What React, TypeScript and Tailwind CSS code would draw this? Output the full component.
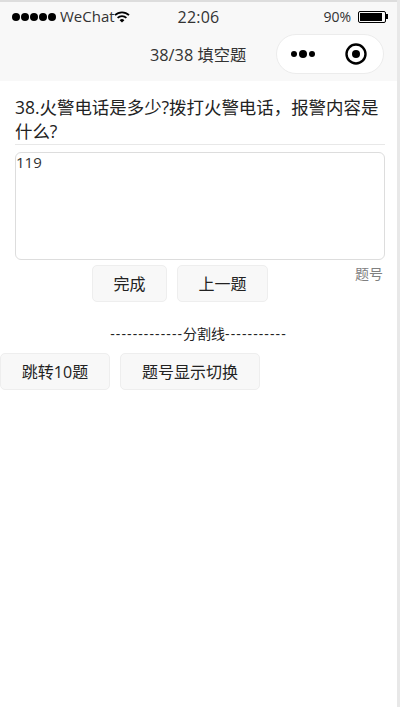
const font = { fontFamily: '"Open Sans", "Noto Sans CJK SC", sans-serif' };

function StatusBar() {
  return (
    <div className="flex h-[27px] items-center justify-between pl-[12px] pr-[9px] pt-[2px] text-[15px] leading-none text-[#333]">
      <div className="flex w-[132px] items-center">
        <div className="flex gap-[1px]">
          {[0, 1, 2, 3, 4].map((i) => (
            <span key={i} className="h-[8px] w-[8px] rounded-full bg-black" />
          ))}
        </div>
        <span className="ml-[4px]">WeChat</span>
        <svg width="16" height="12" viewBox="0 0 16 12" className="-ml-[1px]">
          <path d="M1 4.2a10 10 0 0 1 14 0" fill="none" stroke="#000" strokeWidth="1.8" />
          <path d="M3.6 6.8a6.4 6.4 0 0 1 8.8 0" fill="none" stroke="#000" strokeWidth="1.8" />
          <path d="M5.6 9.2a3.4 3.4 0 0 1 4.8 0L8 11.6z" fill="#000" />
        </svg>
      </div>
      <span className="-ml-[3px] text-[16px] tracking-[0.2px]">22:06</span>
      <div className="flex w-[132px] items-center justify-end gap-[7px]">
        <span className="text-[14px]">90%</span>
        <div className="flex items-center">
          <div className="flex h-[12px] w-[28px] items-center rounded-[2px] border border-black p-[1px]">
            <div className="h-full w-[90%] bg-black" />
          </div>
          <div className="h-[5px] w-[2px] bg-black" />
        </div>
      </div>
    </div>
  );
}

function Capsule() {
  return (
    <div className="flex h-[40px] w-[108px] items-center justify-between rounded-full border border-[#ececec] bg-white pl-[14px] pr-[16px]">
      <div className="flex items-center gap-[2px]">
        <span className="h-[6px] w-[6px] rounded-full bg-black" />
        <span className="h-[8px] w-[8px] rounded-full bg-black" />
        <span className="h-[6px] w-[6px] rounded-full bg-black" />
      </div>
      <svg width="22" height="22" viewBox="0 0 22 22">
        <circle cx="11" cy="11" r="9.5" fill="none" stroke="#000" strokeWidth="2.4" />
        <circle cx="11" cy="11" r="4" fill="#000" />
      </svg>
    </div>
  );
}

export default function App() {
  return (
    <div className="min-h-[707px] w-[400px] border-r-[3px] border-[#e8e8e8] bg-white" style={font}>
      <div className="h-[81px] border-t-2 border-[#dddddd] bg-[#f8f8f8]">
        <StatusBar />
        <div className="flex h-[50px] items-center justify-between">
          <span className="ml-[150px] mt-[2px] text-[16.3px] text-[#333]">38/38 填空题</span>
          <div className="mr-[13px]">
            <Capsule />
          </div>
        </div>
      </div>

      <div className="ml-[15px] mr-[12px] mt-[14px] border-b border-[#e8e8e8] pb-[1px] text-[17.45px] leading-[24px] text-[#222]">
        38.火警电话是多少?拨打火警电话，报警内容是什么?
      </div>

      <div className="ml-[15px] mr-[12px] mt-[7px] h-[108px] rounded-[6px] border border-[#dddddd] text-[15px] leading-[18px] text-[#333]">
        119
      </div>

      <div className="mt-[5px] flex items-start">
        <div className="ml-[92px] flex gap-[10px]">
          <button className="h-[37px] w-[75px] rounded-[5px] border border-[#eeeeee] bg-[#f8f8f8] text-[16px] text-[#222]">
            完成
          </button>
          <button className="h-[37px] w-[91px] rounded-[5px] border border-[#eeeeee] bg-[#f8f8f8] text-[16px] text-[#222]">
            上一题
          </button>
        </div>
        <span className="ml-[87px] text-[14px] leading-[18px] text-[#808080]">题号</span>
      </div>

      <div className="mt-[22px] text-center text-[14px] leading-[20px] text-[#222]">
        <span className="tracking-[1.1px]">-------------</span>分割线<span className="tracking-[1.1px]">-----------</span>
      </div>

      <div className="mt-[9px] flex gap-[10px]">
        <button className="h-[37px] w-[110px] rounded-[5px] border border-[#eeeeee] bg-[#f8f8f8] text-[16px] text-[#222]">
          跳转10题
        </button>
        <button className="h-[37px] w-[140px] rounded-[5px] border border-[#eeeeee] bg-[#f8f8f8] text-[16px] text-[#222]">
          题号显示切换
        </button>
      </div>
    </div>
  );
}
